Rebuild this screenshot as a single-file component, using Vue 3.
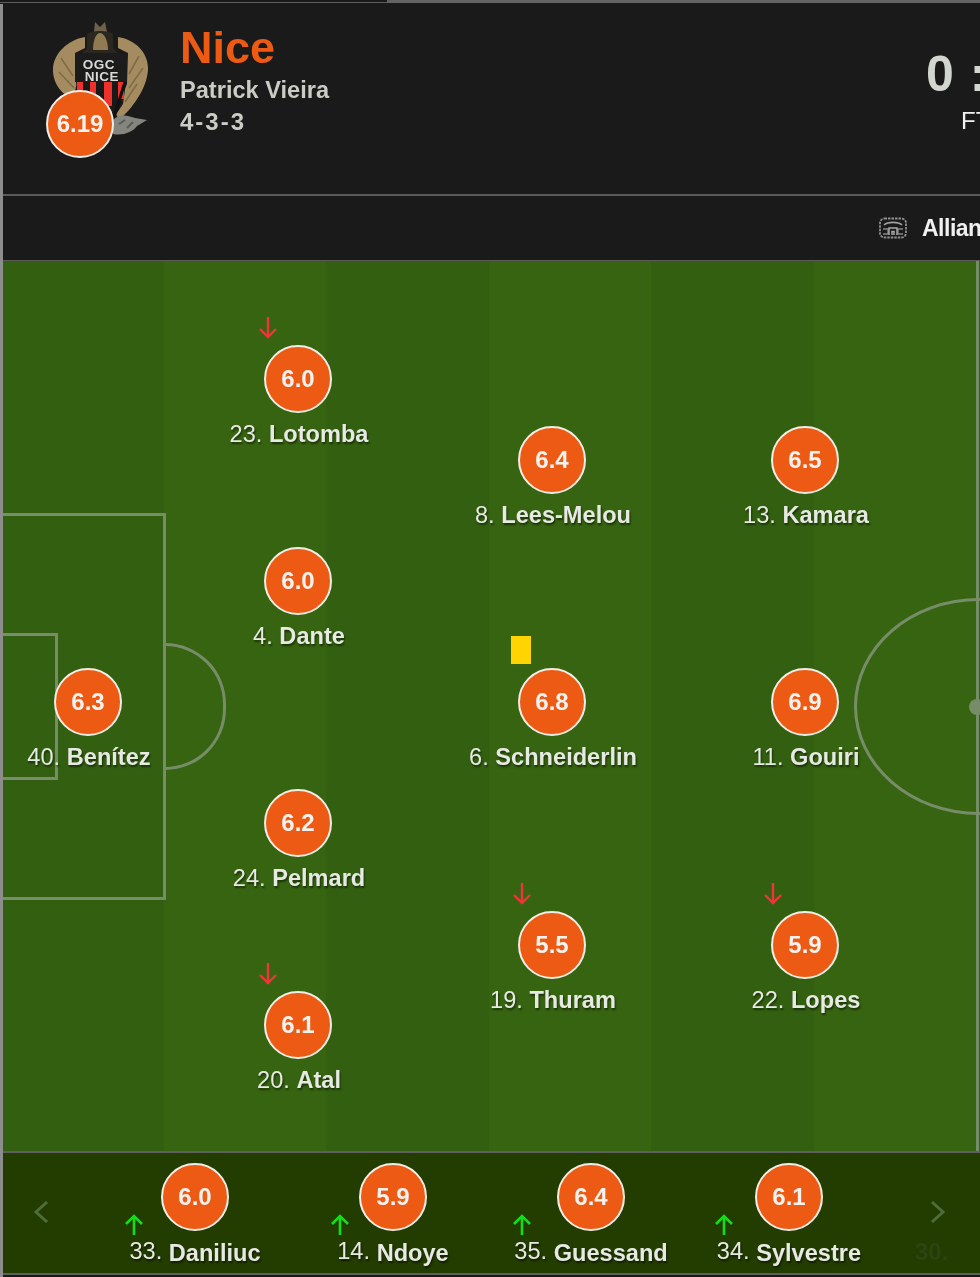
<script setup>
const players = [
  { num: '23.', name: 'Lotomba', rating: '6.0', x: 298, y: 345, sub: 'out', markX: -30 },
  { num: '4.', name: 'Dante', rating: '6.0', x: 298, y: 547 },
  { num: '24.', name: 'Pelmard', rating: '6.2', x: 298, y: 789 },
  { num: '20.', name: 'Atal', rating: '6.1', x: 298, y: 991, sub: 'out', markX: -30 },
  { num: '8.', name: 'Lees-Melou', rating: '6.4', x: 552, y: 426 },
  { num: '13.', name: 'Kamara', rating: '6.5', x: 805, y: 426 },
  { num: '6.', name: 'Schneiderlin', rating: '6.8', x: 552, y: 668, card: true },
  { num: '11.', name: 'Gouiri', rating: '6.9', x: 805, y: 668 },
  { num: '19.', name: 'Thuram', rating: '5.5', x: 552, y: 911, sub: 'out', markX: -30 },
  { num: '22.', name: 'Lopes', rating: '5.9', x: 805, y: 911, sub: 'out', markX: -32 },
  { num: '40.', name: 'Benítez', rating: '6.3', x: 88, y: 668 }
]
const bench = [
  { num: '33.', name: 'Daniliuc', rating: '6.0', markX: -61 },
  { num: '14.', name: 'Ndoye', rating: '5.9', markX: -53 },
  { num: '35.', name: 'Guessand', rating: '6.4', markX: -69 },
  { num: '34.', name: 'Sylvestre', rating: '6.1', markX: -65 }
]
const stripes = [0, 1, 2, 3, 4, 5]
</script>

<template>
  <div class="page">
    <div class="topline"><span class="topline-a"></span><span class="topline-b"></span></div>
    <header class="head">
      <div class="crest">
        <svg class="crest-svg" viewBox="0 0 100 116" width="100" height="116" aria-hidden="true">
          <path d="M42 0 L47 5 L52 0 L54 10 H41 Z" fill="#6e624b"/>
          <path d="M34 26 V12 C38 8 56 8 60 12 V26 L66 32 H28 Z" fill="#2a2620"/>
          <path d="M40 28 C40 18 43 11 47 11 C51 11 55 18 55 28 Z" fill="#8f7a52"/>
          <path d="M32 15 C14 18 1 32 0 46 C-1 60 8 72 20 78 L24 60 L22 31 L32 26 Z" fill="#a58c60"/>
          <path d="M65 15 C84 18 95 32 95 46 C95 62 84 82 66 98 L62 90 L74 62 L75 31 L65 26 Z" fill="#a58c60"/>
          <path d="M8 36 L20 54 M6 50 L21 66 M86 34 L76 52 M90 46 L76 66 M84 62 L72 80" stroke="#806c45" stroke-width="1.6" fill="none"/>
          <rect x="22" y="31" width="52" height="29" fill="#1c1c1c"/>
          <text x="46" y="46.5" class="crest-text">OGC</text>
          <text x="49" y="58.5" class="crest-text">NICE</text>
          <path d="M23 60 H73 L70 82 L58 100 L44 104 L28 84 Z" fill="#191919"/>
          <path d="M24 60 h6 v20 h-6 Z M37 60 h6 v24 h-6 Z M51 60 h8 v24 h-8 Z M65 60 h6 v17 h-6 Z" fill="#f0302b"/>
          <path d="M72 60 L60 98" stroke="#111" stroke-width="3" fill="none"/>
          <path d="M58 100 C66 90 76 94 82 96 L94 98 L84 104 C80 110 70 114 60 112 Z" fill="#85857f"/>
          <path d="M66 102 L72 98 M74 106 L80 100" stroke="#5a5a57" stroke-width="2" fill="none"/>
        </svg>
        <span class="badge team-badge">6.19</span>
      </div>
      <div class="team">
        <h1 class="team-name">Nice</h1>
        <div class="coach">Patrick Vieira</div>
        <div class="formation">4-3-3</div>
      </div>
      <div class="score">
        <div class="score-num">0 : 0</div>
        <div class="score-state">FT</div>
      </div>
    </header>
    <div class="venue">
      <svg class="venue-icon" viewBox="0 0 28 22" width="28" height="22" aria-hidden="true">
        <rect x="1" y="1.5" width="26" height="19" rx="4.5" fill="none" stroke="#8f8f8f" stroke-width="1.8" stroke-dasharray="2.5 1"/>
        <path d="M5 8 C9 4.5 19 4.5 23 8" stroke="#a0a0a0" stroke-width="1.6" fill="none"/>
        <path d="M4 12 H9 V17 H4 M24 12 H19 V17 H24" stroke="#858585" stroke-width="1.4" fill="none"/>
        <path d="M10 18 V11 H18 V18 M13 18 V14.5 H15 V18" stroke="#a8a8a8" stroke-width="1.5" fill="none"/>
      </svg>
      <span class="venue-name">Allianz Riviera</span>
    </div>
    <main class="pitch">
      <div class="stripes">
        <i v-for="s in stripes" :key="s" class="stripe" :class="{ alt: s % 2 === 1 }"></i>
      </div>
      <div class="box-big"></div>
      <div class="box-small"></div>
      <div class="arc"></div>
      <div class="centre-circle"></div>
      <div class="halfway"></div>
      <div class="spot"></div>
      <div
        v-for="p in players"
        :key="p.num"
        class="player"
        :style="{ left: p.x - 3 + 'px', top: p.y - 261 + 'px' }"
      >
        <svg v-if="p.sub === 'out'" class="arrow" :style="{ left: p.markX + 'px' }" viewBox="0 0 20 24" width="20" height="24" aria-hidden="true">
          <path d="M10 1 V21 M2 13 L10 21 L18 13" fill="none" stroke="#f1333b" stroke-width="2.4"/>
        </svg>
        <span v-if="p.card" class="card"></span>
        <span class="badge">{{ p.rating }}</span>
        <span class="label"><span class="num">{{ p.num }}</span> <b>{{ p.name }}</b></span>
      </div>
    </main>
    <section class="bench">
      <svg class="chev" viewBox="0 0 16 24" width="16" height="24" aria-hidden="true">
        <path d="M14 2 L3 12 L14 22" fill="none" stroke="#4f6d3a" stroke-width="3"/>
      </svg>
      <div class="bench-list">
        <div v-for="p in bench" :key="p.num" class="sub">
          <span class="badge">{{ p.rating }}</span>
          <svg class="arrow-in" :style="{ left: 'calc(50% + ' + p.markX + 'px - 10px)' }" viewBox="0 0 20 24" width="20" height="24" aria-hidden="true">
            <path d="M10 22 V3 M2 11 L10 3 L18 11" fill="none" stroke="#0fe01a" stroke-width="2.6"/>
          </svg>
          <span class="label bench-label"><span class="num">{{ p.num }}</span> <b>{{ p.name }}</b></span>
        </div>
      </div>
      <span class="ghost">30.</span>
      <svg class="chev chev-r" viewBox="0 0 16 24" width="16" height="24" aria-hidden="true">
        <path d="M2 2 L13 12 L2 22" fill="none" stroke="#4f6d3a" stroke-width="3"/>
      </svg>
    </section>
    <div class="foot"></div>
  </div>
</template>

<style>
html, body { margin: 0; background: #1a1a1a; overflow: hidden; }
</style>

<style scoped>
.page {
  width: 980px;
  height: 1277px;
  overflow: hidden;
  box-sizing: border-box;
  padding-left: 3px;
  background: #1a1a1a;
  font-family: "Liberation Sans", Arial, sans-serif;
  filter: blur(0.6px);
  position: relative;
  box-shadow: inset 3px 0 0 #8d8d8d;
}
.topline { display: flex; height: 4px; margin-left: -3px; }
.topline-a { width: 387px; background: linear-gradient(#1a1a1a 0 2px, #5c5c5c 2px 3px, #1a1a1a 3px); }
.topline-b { flex: 1; background: linear-gradient(#636363 0 3px, #1a1a1a 3px); }
.head {
  height: 190px;
  display: flex;
  border-bottom: 2px solid #5a5a5a;
  box-sizing: content-box;
}
.crest { position: relative; width: 177px; flex: none; }
.crest-svg { position: absolute; left: 50px; top: 18px; }
.crest-text { font: bold 13.5px "Liberation Sans", sans-serif; fill: #d9dbd6; text-anchor: middle; letter-spacing: 0.5px; }
.team-badge { position: absolute; left: 43px; top: 86px; }
.team { width: 746px; flex: none; padding-top: 17px; }
.team-name {
  margin: 0;
  font-size: 45px;
  line-height: 54px;
  font-weight: bold;
  color: #ec5a13;
}
.coach { font-size: 23.6px; line-height: 32px; margin-top: -1px; font-weight: bold; color: #c9cbc4; }
.formation { font-size: 24px; line-height: 32px; font-weight: bold; color: #c9cbc4; letter-spacing: 2px; }
.score { flex: none; white-space: nowrap; padding-top: 40px; }
.score-num { font-size: 50px; line-height: 60px; font-weight: bold; color: #d3d6cf; letter-spacing: 1px; }
.score-state { font-size: 24px; line-height: 32px; color: #f1f1f1; margin: 1px 0 0 35px; }
.venue {
  height: 64px;
  display: flex;
  align-items: center;
  padding-left: 876px;
  white-space: nowrap;
  border-bottom: 1px solid #5a5a5a;
}
.venue-icon { flex: none; margin-right: 15px; }
.venue-name { font-size: 23px; letter-spacing: -0.5px; font-weight: bold; color: #f0f0f0; }
.pitch {
  position: relative;
  height: 890px;
  overflow: hidden;
  background: #34620f;
  border-bottom: 2px solid #5f5f5f;
  box-sizing: content-box;
}
.stripes { position: absolute; inset: 0 0 0 -2px; display: flex; }
.stripe { width: 162.6px; background: #326010; flex: none; }
.stripe.alt { background: #366410; }
.box-big, .box-small, .arc, .centre-circle, .halfway, .spot { position: absolute; box-sizing: border-box; border: 3px solid #778c69; }
.box-big { left: -3px; top: 252px; width: 166px; height: 387px; }
.box-small { left: -3px; top: 372px; width: 58px; height: 147px; }
.arc { left: 162px; top: 382px; width: 61px; height: 127px; border-left: 0; border-radius: 0 64px 64px 0 / 0 64px 64px 0; }
.centre-circle { left: 851px; top: 337px; width: 250px; height: 217px; border-radius: 50%; }
.halfway { left: 973px; top: 0; width: 3px; height: 100%; border: 0; background: #778c69; }
.spot { left: 966px; top: 438px; width: 16px; height: 16px; border: 0; border-radius: 50%; background: #778c69; }
.player { position: absolute; width: 0; display: flex; flex-direction: column; align-items: center; }
.badge {
  flex: none;
  box-sizing: border-box;
  width: 68px;
  height: 68px;
  border-radius: 50%;
  border: 2px solid #efeee8;
  background: #ec5a13;
  color: #f4f2ee;
  font-size: 24px;
  font-weight: bold;
  display: flex;
  align-items: center;
  justify-content: center;
}
.label {
  margin-top: 6px;
  padding-left: 2px;
  white-space: nowrap;
  font-size: 23.6px;
  line-height: 30px;
  color: #e7e9e3;
  text-shadow: 1px 2px 2px rgba(0, 0, 0, 0.5);
}
.num { font-weight: normal; }
.arrow { position: absolute; top: -29px; margin-left: -10px; }
.card { position: absolute; left: -41px; top: -32px; width: 20px; height: 28px; background: #ffd400; }
.bench {
  position: relative;
  height: 120px;
  display: flex;
  background: #233c00;
  border-bottom: 2px solid #5f5f5f;
  overflow: hidden;
}
.chev { position: absolute; left: 30px; top: 47px; }
.chev-r { left: 927px; }
.bench-list { display: flex; margin-left: 93px; padding-top: 10px; }
.sub { position: relative; width: 198px; display: flex; flex-direction: column; align-items: center; }
.arrow-in { position: absolute; top: 50px; }
.bench-label { margin-top: 7px; padding-left: 0; }
.bench-label .num { position: relative; top: -2px; }
.ghost { position: absolute; left: 912px; top: 85px; font-size: 24px; font-weight: bold; color: #2c4412; }
.foot { height: 3px; background: #1a1a1a; }
</style>
